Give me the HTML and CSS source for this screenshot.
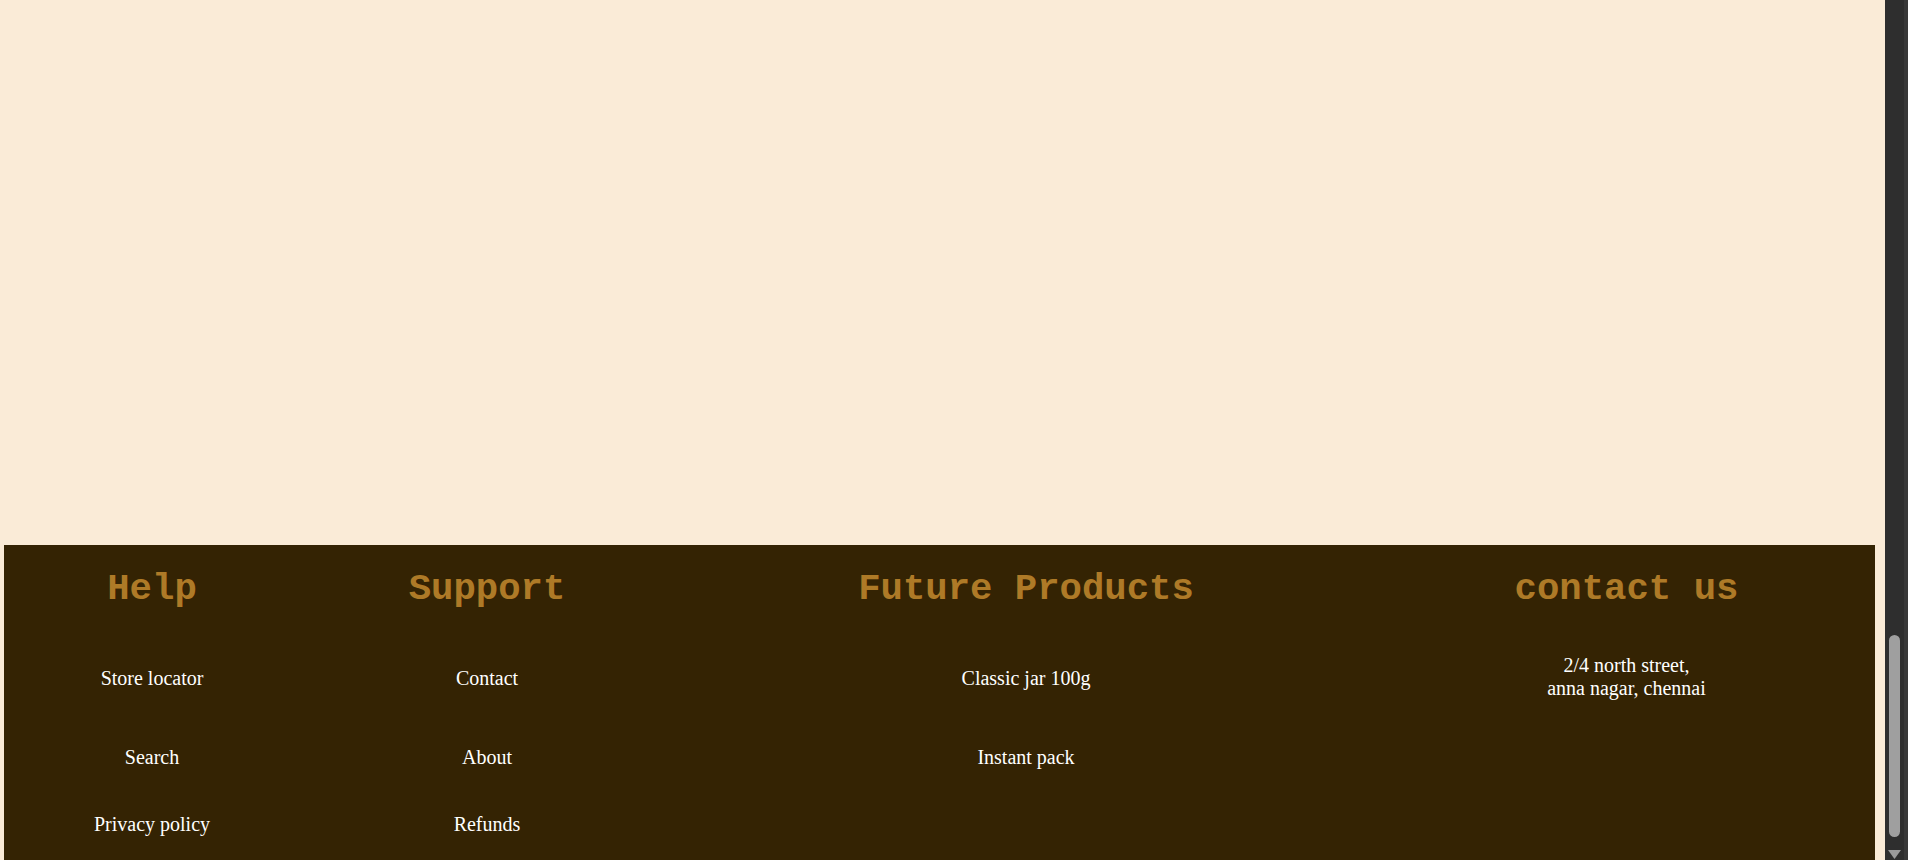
FILE: index.html
```html
<!DOCTYPE html>
<html lang="en">
<head>
<meta charset="utf-8">
<title>Footer</title>
<link rel="stylesheet" href="styles.css">
</head>
<body>
<div class="page">
  <footer class="footer">
    <h2 class="head">Help</h2>
    <h2 class="head">Support</h2>
    <h2 class="head">Future Products</h2>
    <h2 class="head">contact us</h2>

    <a class="item" href="#">Store locator</a>
    <a class="item" href="#">Contact</a>
    <a class="item" href="#">Classic jar 100g</a>
    <p class="item address">2/4 north street,<br>anna nagar, chennai</p>

    <a class="item" href="#">Search</a>
    <a class="item" href="#">About</a>
    <a class="item" href="#">Instant pack</a>
    <span class="item"></span>

    <a class="item" href="#">Privacy policy</a>
    <a class="item" href="#">Refunds</a>
    <span class="item"></span>
    <span class="item"></span>
  </footer>
</div>
<div class="scrollbar">
  <div class="track">
    <div class="thumb"></div>
  </div>
  <svg class="arrow" width="13" height="10" viewBox="0 0 13 10"><path d="M0 0 H13 L6.5 9 Z" fill="#9a9a9a"/></svg>
  <div class="edge"></div>
</div>
</body>
</html>
```

FILE: styles.css
```css
html, body {
  margin: 0;
  padding: 0;
  height: 860px;
  overflow: hidden;
}
body {
  display: flex;
  background: #faebd7;
  font-family: "Liberation Serif", "Times New Roman", serif;
}
.page {
  flex: 1;
  display: flex;
  flex-direction: column;
  justify-content: flex-end;
  padding: 0 10px 0 4px;
}
.footer {
  background: #342303;
  height: 315px;
  display: grid;
  grid-template-columns: 296px 374px 704px 497px;
  grid-template-rows: 86px 94px 64px 71px;
  align-items: center;
  justify-items: center;
  text-align: center;
}
.head {
  margin: 0;
  font-family: "Courier New", "Nimbus Mono PS", "FreeMono", "Liberation Mono", monospace;
  font-weight: bold;
  font-size: 37.3px;
  line-height: 42px;
  color: #ae7a27;
  position: relative;
  top: 1px;
}
.item {
  margin: 0;
  color: #ffffff;
  text-decoration: none;
  font-size: 20px;
  line-height: 23px;
}
.address {
  line-height: 23px;
  position: relative;
  top: -1px;
}
.scrollbar {
  width: 23px;
  background: #2e2e2e;
  display: flex;
  flex-direction: column;
  position: relative;
}
.track {
  flex: 1;
  display: flex;
  flex-direction: column;
  justify-content: flex-end;
  padding: 0 8px 13px 4px;
}
.thumb {
  height: 202px;
  width: 11px;
  background: #9f9f9f;
  border-radius: 6px;
}
.arrow {
  margin: 0 0 0 3px;
  display: block;
}
.edge {
  position: absolute;
  right: 0;
  top: 0;
  bottom: 0;
  width: 4px;
  background: #383838;
}
```
